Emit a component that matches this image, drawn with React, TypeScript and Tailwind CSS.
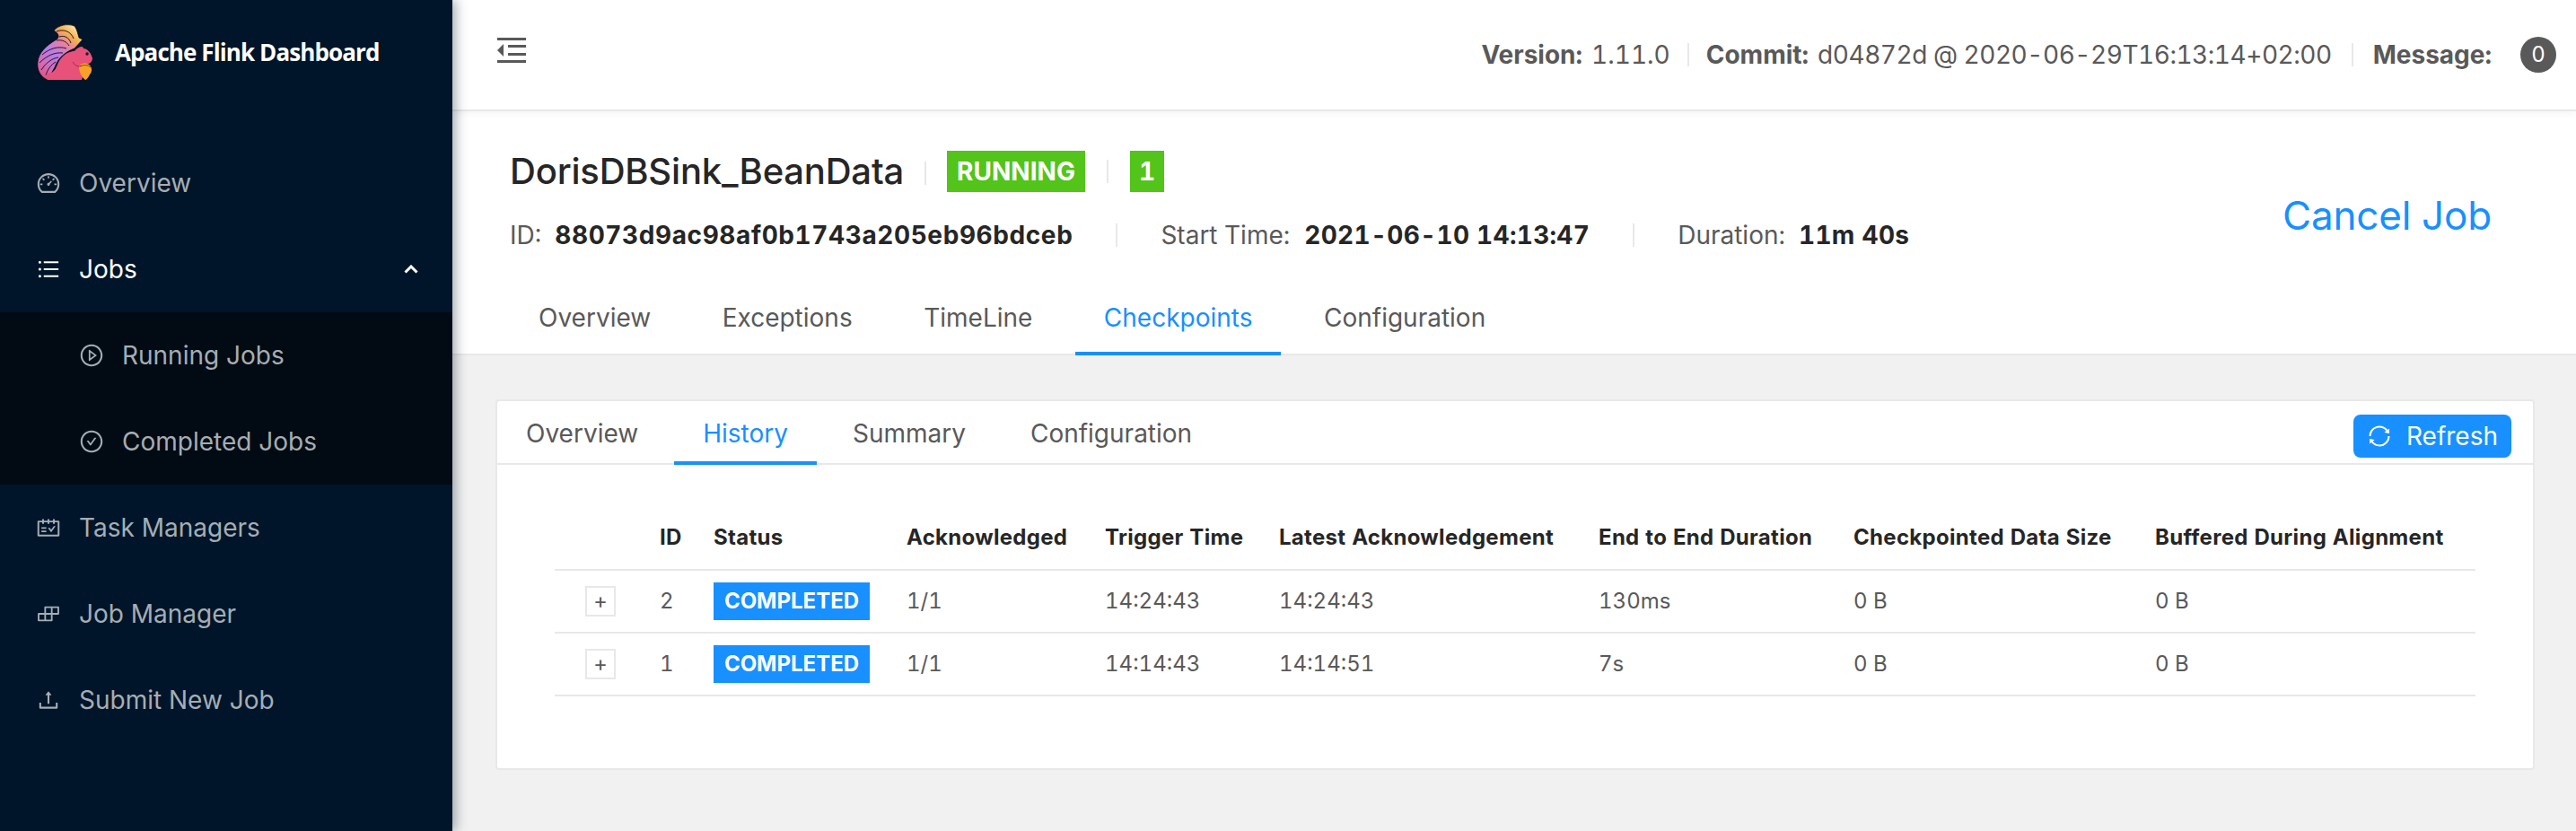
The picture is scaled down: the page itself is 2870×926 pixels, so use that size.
import React from "react";
import {
  AiOutlineDashboard, AiOutlineUnorderedList, AiOutlinePlayCircle, AiOutlineCheckCircle,
  AiOutlineSchedule, AiOutlineBuild, AiOutlineUpload, AiOutlineSync,
} from "react-icons/ai";

function Logo() {
  return (
    <svg viewBox="0 0 62 62" className="w-[62px] h-[62px] shrink-0">
      <defs>
        <linearGradient id="tail" x1="0.1" y1="1" x2="0.75" y2="0">
          <stop offset="0" stopColor="#e4507c" />
          <stop offset="0.22" stopColor="#d46bb8" />
          <stop offset="0.45" stopColor="#b97ce6" />
          <stop offset="0.68" stopColor="#e77fa6" />
          <stop offset="0.85" stopColor="#f5b04f" />
          <stop offset="1" stopColor="#fbe0a8" />
        </linearGradient>
      </defs>
      <path d="M12 62C3 58 0 50 1 42C2 32 10 24 22 17C26 14 24 10 19 7C24 1 34 -1 42 2C45 6 46 12 47 15L51 17L42 27C34 30 24 36 20 48Z" fill="url(#tail)" stroke="#05080f" strokeWidth="0.7" />
      <path d="M22 8C30 5 38 8 41 16M25 14C31 12 36 15 38 21M22 18C28 17 33 19 36 24M6 34C14 27 24 24 33 27M3 43C11 35 20 31 29 32M5 51C10 43 17 38 24 37M10 57C12 50 16 45 21 42" stroke="#0a0f1c" strokeWidth="0.9" fill="none" />
      <path d="M12 62C8 58 10 54 16 54C22 52 22 44 27 38C32 32 38 30 42 30C44 27 47 25 51 25L52 27C56 27 60 31 62 38C62 42 58 45 54 45L54 50L50 62Z" fill="#e8517a" />
      <circle cx="56" cy="33" r="1.7" fill="#1a1020" />
      <path d="M47 47C50 42 58 43 60 47C62 50 61 54 59 56C57 60 55 62 54 62C50 59 47 53 47 47Z" fill="#f7a128" />
      <path d="M48 47C52 45 57 45 60 48" stroke="#7a3a10" strokeWidth="0.9" fill="none" />
      <path d="M40 42C43 47 47 48 50 46" stroke="#a52a50" strokeWidth="1" fill="none" />
    </svg>
  );
}

function FoldIcon() {
  return (
    <svg viewBox="0 0 32 28" className="w-[32px] h-[28px] shrink-0" fill="#595959">
      <rect x="0" y="0" width="32" height="3" />
      <rect x="0" y="25" width="32" height="3" />
      <rect x="12" y="8" width="20" height="3" />
      <rect x="12" y="17" width="20" height="3" />
      <path d="M7 7V21L0 14Z" />
    </svg>
  );
}

function NavItem({ icon, label, sub, active, right }: { icon: React.ReactNode; label: string; sub?: boolean; active?: boolean; right?: React.ReactNode }) {
  return (
    <div className={`h-[96px] flex items-center gap-5 pr-[38px] text-[28px] ${sub ? "pl-[88px]" : "pl-[40px]"} ${active ? "text-white" : "text-[#a6adb4]"}`}>
      <span className="text-[32px] w-[28px] flex items-center justify-center shrink-0">{icon}</span>
      <span className="flex-1 leading-[40px]">{label}</span>
      {right}
    </div>
  );
}

function Sep({ className }: { className: string }) {
  return <span className={`w-[2px] bg-[#e8e8e8] shrink-0 ${className}`} />;
}

function Sidebar() {
  return (
    <aside className="w-[504px] shrink-0 bg-[#001529] flex flex-col relative z-20 shadow-[4px_0_12px_rgba(0,21,41,0.35)]">
      <div className="h-[116px] flex items-center pl-[41px] gap-[25px]">
        <Logo />
        <span className="text-white font-bold text-[26px] tracking-[-0.9px] font-['Open_Sans',sans-serif]">Apache Flink Dashboard</span>
      </div>
      <div className="pt-[40px]">
        <NavItem icon={<AiOutlineDashboard />} label="Overview" />
        <NavItem
          icon={<AiOutlineUnorderedList />}
          label="Jobs"
          active
          right={
            <svg viewBox="0 0 16 10" className="w-[16px] h-[10px] shrink-0">
              <path d="M1.5 8.5L8 2L14.5 8.5" fill="none" stroke="#ffffff" strokeWidth="3" />
            </svg>
          }
        />
        <div className="bg-[#020b13]">
          <NavItem sub icon={<AiOutlinePlayCircle />} label="Running Jobs" />
          <NavItem sub icon={<AiOutlineCheckCircle />} label="Completed Jobs" />
        </div>
        <NavItem icon={<AiOutlineSchedule />} label="Task Managers" />
        <NavItem icon={<AiOutlineBuild />} label="Job Manager" />
        <NavItem icon={<AiOutlineUpload />} label="Submit New Job" />
      </div>
    </aside>
  );
}

function TopBar() {
  return (
    <header className="relative z-10 h-[124px] bg-white border-b-2 border-[#e8e8e8] shadow-[0_2px_8px_rgba(0,21,41,0.05)] flex items-center pl-[50px] pr-[22px] text-[28px] text-[#595959] tabular-nums shrink-0">
      <span className="-mt-[10px]"><FoldIcon /></span>
      <div className="ml-auto flex items-center">
        <span className="font-bold">Version:</span>
        <span className="ml-[10px]">1.11.0</span>
        <Sep className="h-[26px] mx-[19px]" />
        <span className="font-bold">Commit:</span>
        <span className="ml-[10px] tracking-[-0.47px]">d04872d @ 2020-06-29T16:13:14+02:00</span>
        <Sep className="h-[26px] mx-[22px]" />
        <span className="font-bold">Message:</span>
        <span className="ml-[32px] w-[40px] h-[40px] rounded-full bg-[#595959] text-white text-[24px] flex items-center justify-center">0</span>
      </div>
    </header>
  );
}

function JobHeader() {
  const tabs = ["Overview", "Exceptions", "TimeLine", "Checkpoints", "Configuration"];
  return (
    <section className="bg-white border-b-2 border-[#e8e8e8] shrink-0 h-[272px] flex flex-col tabular-nums">
      <div className="flex-1 flex items-start pl-[64px] pr-[94px]">
        <div className="flex-1">
          <div className="flex items-center pt-[44px] h-[90px]">
            <span className="text-[40px] text-[#262626] font-medium tracking-[-0.2px]">DorisDBSink_BeanData</span>
            <Sep className="h-[26px] mx-[23px] mt-[4px]" />
            <span className="bg-[#52c41a] text-white text-[28px] font-bold h-[46px] w-[154px] flex items-center justify-center">RUNNING</span>
            <Sep className="h-[26px] mx-[24px]" />
            <span className="bg-[#52c41a] text-white text-[28px] font-bold h-[46px] w-[38px] flex items-center justify-center">1</span>
          </div>
          <div className="flex items-center text-[28px] text-[#595959] mt-[28px] h-[40px]">
            <span>ID:</span>
            <span className="ml-[15px] font-bold text-[#262626] tracking-[0.6px]">88073d9ac98af0b1743a205eb96bdceb</span>
            <Sep className="h-[26px] ml-[48px] mr-[48px]" />
            <span>Start Time:</span>
            <span className="ml-[16px] font-bold text-[#262626] tracking-[0.3px]">2021-06-10 14:13:47</span>
            <Sep className="h-[26px] ml-[48px] mr-[48px]" />
            <span>Duration:</span>
            <span className="ml-[15px] font-bold text-[#262626] tracking-[0.3px]">11m 40s</span>
          </div>
        </div>
        <button className="text-[44px] text-[#1890ff] mt-[88px] leading-[56px] tracking-[-0.15px]">Cancel Job</button>
      </div>
      <div className="flex pl-[64px] h-[70px] text-[28px] text-[#595959] -mb-[2px]">
        {tabs.map((t) => (
          <div key={t} className={`px-[32px] mr-[15.5px] pb-[10px] flex items-center border-b-4 ${t === "Checkpoints" ? "border-[#1890ff] text-[#1890ff]" : "border-transparent"}`}>{t}</div>
        ))}
      </div>
    </section>
  );
}

function CardTabs() {
  const tabs = ["Overview", "History", "Summary", "Configuration"];
  return (
    <div className="h-[71px] border-b-2 border-[#e8e8e8] flex items-stretch pr-[24px] text-[28px] text-[#595959]">
      <div className="flex -mb-[2px]">
        {tabs.map((t) => (
          <div key={t} className={`px-[32px] mr-[8px] pt-[4px] flex items-center border-b-4 ${t === "History" ? "border-[#1890ff] text-[#1890ff]" : "border-transparent"}`}>{t}</div>
        ))}
      </div>
      <button className="ml-auto mt-[15px] h-[48px] w-[176px] rounded-[8px] bg-[#1890ff] text-white flex items-center justify-center gap-[16px] text-[28px]">
        <AiOutlineSync className="text-[28px]" />
        Refresh
      </button>
    </div>
  );
}

const heads = ["", "ID", "Status", "Acknowledged", "Trigger Time", "Latest Acknowledgement", "End to End Duration", "Checkpointed Data Size", "Buffered During Alignment"];
const rows = [
  ["2", "1/1", "14:24:43", "14:24:43", "130ms", "0 B", "0 B"],
  ["1", "1/1", "14:14:43", "14:14:51", "7s", "0 B", "0 B"],
];
const widths = ["w-[117px]", "w-[60px]", "w-[215px]", "w-[221px]", "w-[194px]", "w-[356px]", "w-[284px]", "w-[336px]", "w-auto"];

function HistoryTable() {
  return (
    <table className="w-[2140px] table-fixed border-collapse text-[24px] text-[#595959] tabular-nums">
      <thead>
        <tr className="h-[72px] border-b-2 border-[#e8e8e8]">
          {heads.map((h, i) => (
            <th key={i} className={`${widths[i]} text-left font-bold text-[#262626] align-middle whitespace-nowrap tracking-[0.3px]`}>{h}</th>
          ))}
        </tr>
      </thead>
      <tbody>
        {rows.map((r) => (
          <tr key={r[0]} className="h-[70px] border-b-2 border-[#e8e8e8]">
            <td>
              <span className="ml-[34px] w-[34px] h-[34px] border-2 border-[#e8e8e8] flex items-center justify-center text-[24px] leading-none">+</span>
            </td>
            <td>{r[0]}</td>
            <td>
              <span className="bg-[#1890ff] text-white font-bold h-[42px] w-[174px] flex items-center justify-center">COMPLETED</span>
            </td>
            {r.slice(1).map((c, i) => <td key={i}>{c}</td>)}
          </tr>
        ))}
      </tbody>
    </table>
  );
}

export default function App() {
  return (
    <div className="w-[2870px] h-[926px] flex overflow-hidden font-['Inter',sans-serif] bg-[#f1f1f1]">
      <Sidebar />
      <main className="flex-1 flex flex-col min-w-0 bg-[#f1f1f1]">
        <TopBar />
        <JobHeader />
        <div className="pt-[49px] pl-[48px] pr-[46px]">
          <div className="h-[413px] bg-white border-2 border-[#e8e8e8] rounded-[4px]">
            <CardTabs />
            <div className="pl-[64px] pt-[45px]">
              <HistoryTable />
            </div>
          </div>
        </div>
      </main>
    </div>
  );
}
